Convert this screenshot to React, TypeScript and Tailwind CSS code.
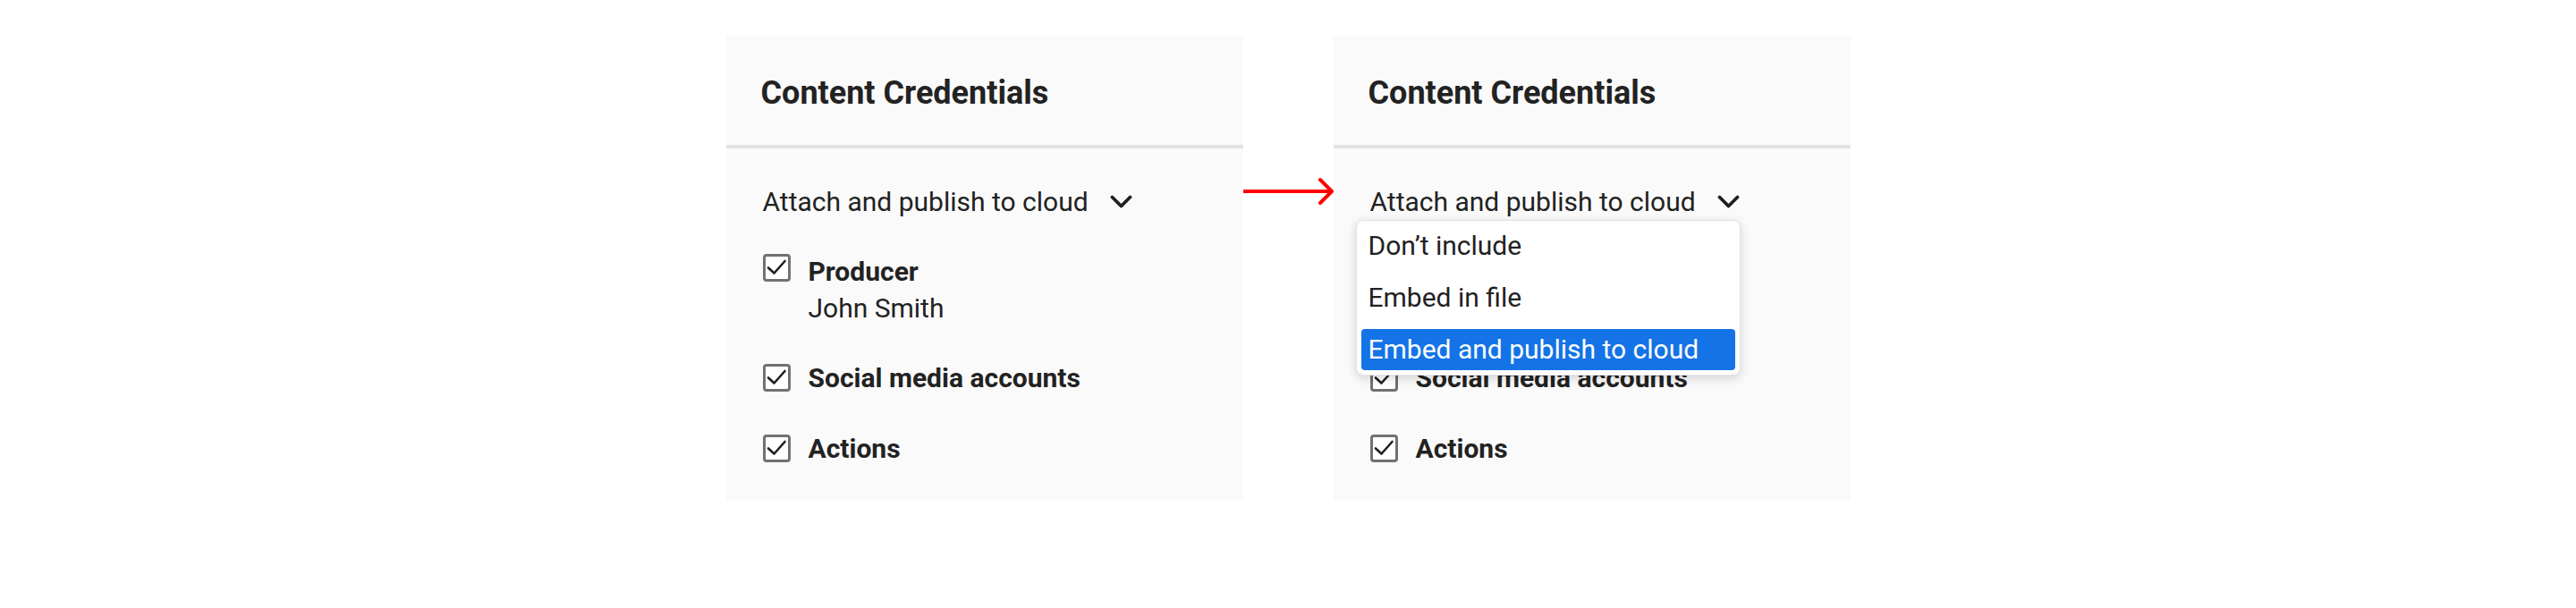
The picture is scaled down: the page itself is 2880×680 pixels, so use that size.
import React from "react";

function Check() {
  return (
    <div className="w-[31px] h-[31px] shrink-0 rounded-[4px] border-[3px] border-[#717171] bg-white flex items-center justify-center">
      <svg width="25" height="25" viewBox="0 0 25 25" className="block">
        <path d="M3 12.5 L9.5 18.5 L21.5 5" fill="none" stroke="#1f1f1f" strokeWidth="2.6" strokeLinecap="round" strokeLinejoin="round" />
      </svg>
    </div>
  );
}

function Chevron() {
  return (
    <svg width="25" height="16" viewBox="0 0 25 16" className="block shrink-0">
      <path d="M2.5 2.5 L12.5 12.5 L22.5 2.5" fill="none" stroke="#1f1f1f" strokeWidth="3.8" strokeLinecap="round" strokeLinejoin="round" />
    </svg>
  );
}

function Panel({ open }: { open: boolean }) {
  return (
    <div className="w-[578px] h-[520px] shrink-0 bg-[#fafafa] flex flex-col text-[#222222]">
      <div className="h-[122px] pt-[6px] pl-[39px] flex items-center">
        <div className="text-[36px] leading-none font-bold">Content Credentials</div>
      </div>
      <div className="h-[4px] bg-[#e2e2e2]" />
      <div className="pl-[41px] pt-[45px] flex flex-col">
        <div className="relative flex items-center gap-[24px] h-[30px]">
          <span className="text-[30px] leading-none">Attach and publish to cloud</span>
          <Chevron />
          {open && (
            <div className="absolute top-[35px] -left-4 w-[430px] z-10 rounded-[8px] bg-white border border-[#e3e3e3] shadow-[0_3px_12px_rgba(0,0,0,0.16)] p-[5px] flex flex-col gap-[12px]">
              <div className="h-[46px] pl-[8px] flex items-center text-[30px] leading-none">Don’t include</div>
              <div className="h-[46px] pl-[8px] flex items-center text-[30px] leading-none">Embed in file</div>
              <div className="h-[46px] pl-[8px] flex items-center text-[30px] leading-none rounded-[4px] bg-[#1473e6] text-white">Embed and publish to cloud</div>
            </div>
          )}
        </div>
        <div className="mt-[43px] flex items-start gap-[20px]">
          <Check />
          <div className="mt-[5px] flex flex-col gap-[11px] text-[30px] leading-none">
            <span className="font-bold">Producer</span>
            <span>John Smith</span>
          </div>
        </div>
        <div className="mt-[42px] flex items-center gap-[20px] h-[41px]">
          <Check />
          <span className="text-[30px] leading-none font-bold">Social media accounts</span>
        </div>
        <div className="mt-[38px] flex items-center gap-[20px] h-[41px]">
          <Check />
          <span className="text-[30px] leading-none font-bold">Actions</span>
        </div>
      </div>
    </div>
  );
}

export default function App() {
  return (
    <div className="w-[2880px] h-[680px] bg-white flex justify-center pt-[40px]" style={{ fontFamily: "Roboto, 'Noto Sans', sans-serif" }}>
      <Panel open={false} />
      <div className="w-[101px] shrink-0 pt-[158px]">
        <svg width="101" height="32" viewBox="0 0 101 32" className="block">
          <path d="M0 16 L99 16" stroke="#ff0000" strokeWidth="4" fill="none" />
          <path d="M86 3 L99 16 L86 29" stroke="#ff0000" strokeWidth="4" fill="none" strokeLinecap="round" strokeLinejoin="round" />
        </svg>
      </div>
      <Panel open={true} />
    </div>
  );
}
